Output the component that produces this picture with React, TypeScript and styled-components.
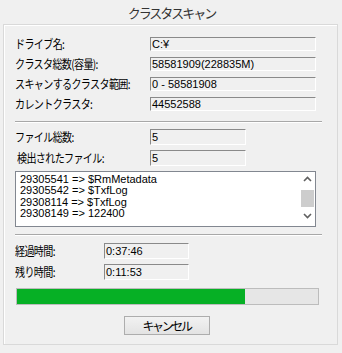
import React from 'react';
import styled, { createGlobalStyle } from 'styled-components';

const GlobalStyle = createGlobalStyle`
  html, body {
    margin: 0;
    padding: 0;
    background: #f0f0f0;
  }
  body {
    font-family: "Liberation Sans", "Noto Sans CJK JP", sans-serif;
  }
`;

const Window = styled.div`
  width: 342px;
  height: 353px;
  background: #f0f0f0;
  display: flex;
  flex-direction: column;
  box-sizing: border-box;
`;

const TitleBar = styled.div`
  height: 24px;
  display: flex;
  align-items: center;
  justify-content: center;
  padding-left: 1px;
  font-family: "Noto Sans CJK JP", sans-serif;
  font-size: 13px;
  letter-spacing: -2px;
  color: #333;
`;

const Frame = styled.div`
  margin-left: 3px;
  width: 335px;
  height: 321px;
  box-sizing: border-box;
  border: 1px solid #d9d9d9;
  box-shadow: inset 1px 1px 0 #fff;
  padding: 12px 15px 0 11px;
  display: flex;
  flex-direction: column;
`;

const Row = styled.div<{ $height: number; $gap?: number; $indent?: number }>`
  display: flex;
  align-items: center;
  height: ${p => p.$height}px;
  margin-top: ${p => p.$gap ?? 0}px;
  padding-left: ${p => p.$indent ?? 0}px;
`;

const Label = styled.div<{ $width: number }>`
  width: ${p => p.$width}px;
  flex-shrink: 0;
  font-family: "Noto Sans CJK JP", sans-serif;
  font-size: 12px;
  letter-spacing: -0.8px;
  color: #000;
  white-space: nowrap;
  line-height: 1;
  transform: scaleX(0.84);
  transform-origin: left center;
`;

const Field = styled.div<{ $width: number }>`
  width: ${p => p.$width}px;
  height: 100%;
  box-sizing: border-box;
  border-top: 1px solid #8a8a8a;
  border-left: 1px solid #8a8a8a;
  border-right: 1px solid #fff;
  border-bottom: 1px solid #fff;
  background: #f0f0f0;
  font-family: "Liberation Sans", sans-serif;
  font-size: 11px;
  color: #000;
  display: flex;
  align-items: center;
  padding-left: 1px;
  white-space: nowrap;
`;

const Separator = styled.div<{ $gap: number }>`
  margin-top: ${p => p.$gap}px;
  width: 307px;
  height: 0;
  border-top: 1px solid #a8a8a8;
  border-bottom: 1px solid #fff;
`;

const ListBox = styled.div`
  margin-top: 5px;
  width: 301px;
  height: 56px;
  box-sizing: border-box;
  border: 1px solid #828790;
  background: #fff;
  display: flex;
`;

const ListLines = styled.div`
  flex: 1;
  padding: 2px 0 0 4px;
  font-family: "Liberation Sans", sans-serif;
  font-size: 11px;
  line-height: 11.3px;
  color: #000;
  white-space: nowrap;
  overflow: hidden;
`;

const ScrollBar = styled.div`
  width: 14px;
  margin-right: 1px;
  display: flex;
  flex-direction: column;
  align-items: center;
  background: #fff;
`;

const ArrowButton = styled.div`
  height: 14px;
  width: 14px;
  display: flex;
  align-items: center;
  justify-content: center;
`;

const Thumb = styled.div`
  width: 13px;
  height: 17px;
  background: #cdcdcd;
  margin-top: 4px;
  margin-bottom: 2px;
`;

const Progress = styled.div`
  margin-top: 8px;
  margin-left: 1px;
  width: 303px;
  height: 17px;
  box-sizing: border-box;
  border: 1px solid #bcbcbc;
  background: #e6e6e6;
`;

const ProgressFill = styled.div`
  height: 100%;
  background: #06b025;
`;

const ButtonRow = styled.div`
  margin-top: 11px;
  display: flex;
  justify-content: center;
  padding-right: 4px;
`;

const Button = styled.button`
  width: 86px;
  height: 19px;
  box-sizing: border-box;
  border: 1px solid #adadad;
  background: linear-gradient(#f2f2f2, #e3e3e3);
  font-family: "Noto Sans CJK JP", sans-serif;
  font-size: 12px;
  letter-spacing: -2.4px;
  color: #000;
  padding: 0;
  display: flex;
  align-items: center;
  justify-content: center;
`;

const Chevron: React.FC<{ up?: boolean }> = ({ up }) => (
  <svg width="9" height="6" viewBox="0 0 9 6">
    <path
      d={up ? 'M1 5 L4.5 1.5 L8 5' : 'M1 1 L4.5 4.5 L8 1'}
      fill="none"
      stroke="#606060"
      strokeWidth="1.6"
    />
  </svg>
);

const driveInfo = [
  { label: 'ドライブ名:', value: 'C:¥' },
  { label: 'クラスタ総数(容量):', value: '58581909(228835M)' },
  { label: 'スキャンするクラスタ範囲:', value: '0 - 58581908' },
  { label: 'カレントクラスタ:', value: '44552588' },
];

const foundFiles = [
  '29305541 => $RmMetadata',
  '29305542 => $TxfLog',
  '29308114 => $TxfLog',
  '29308149 => 122400',
];

const progress = 75.6;

const App: React.FC = () => (
  <>
    <GlobalStyle />
    <Window>
      <TitleBar>クラスタスキャン</TitleBar>
      <Frame>
        {driveInfo.map((item, i) => (
          <Row key={item.label} $height={14} $gap={i === 0 ? 0 : 6}>
            <Label $width={135}>{item.label}</Label>
            <Field $width={166}>{item.value}</Field>
          </Row>
        ))}

        <Separator $gap={10} />

        <Row $height={16} $gap={6}>
          <Label $width={135}>ファイル総数:</Label>
          <Field $width={96}>5</Field>
        </Row>
        <Row $height={16} $gap={5} $indent={2}>
          <Label $width={133}>検出されたファイル:</Label>
          <Field $width={96}>5</Field>
        </Row>

        <ListBox>
          <ListLines>
            {foundFiles.map(line => (
              <div key={line}>{line}</div>
            ))}
          </ListLines>
          <ScrollBar>
            <ArrowButton>
              <Chevron up />
            </ArrowButton>
            <Thumb />
            <ArrowButton>
              <Chevron />
            </ArrowButton>
          </ScrollBar>
        </ListBox>

        <Separator $gap={7} />

        <Row $height={16} $gap={7}>
          <Label $width={89}>経過時間:</Label>
          <Field $width={85}>0:37:46</Field>
        </Row>
        <Row $height={16} $gap={5}>
          <Label $width={89}>残り時間:</Label>
          <Field $width={85}>0:11:53</Field>
        </Row>

        <Progress>
          <ProgressFill style={{ width: `${progress}%` }} />
        </Progress>

        <ButtonRow>
          <Button>キャンセル</Button>
        </ButtonRow>
      </Frame>
    </Window>
  </>
);

export default App;
